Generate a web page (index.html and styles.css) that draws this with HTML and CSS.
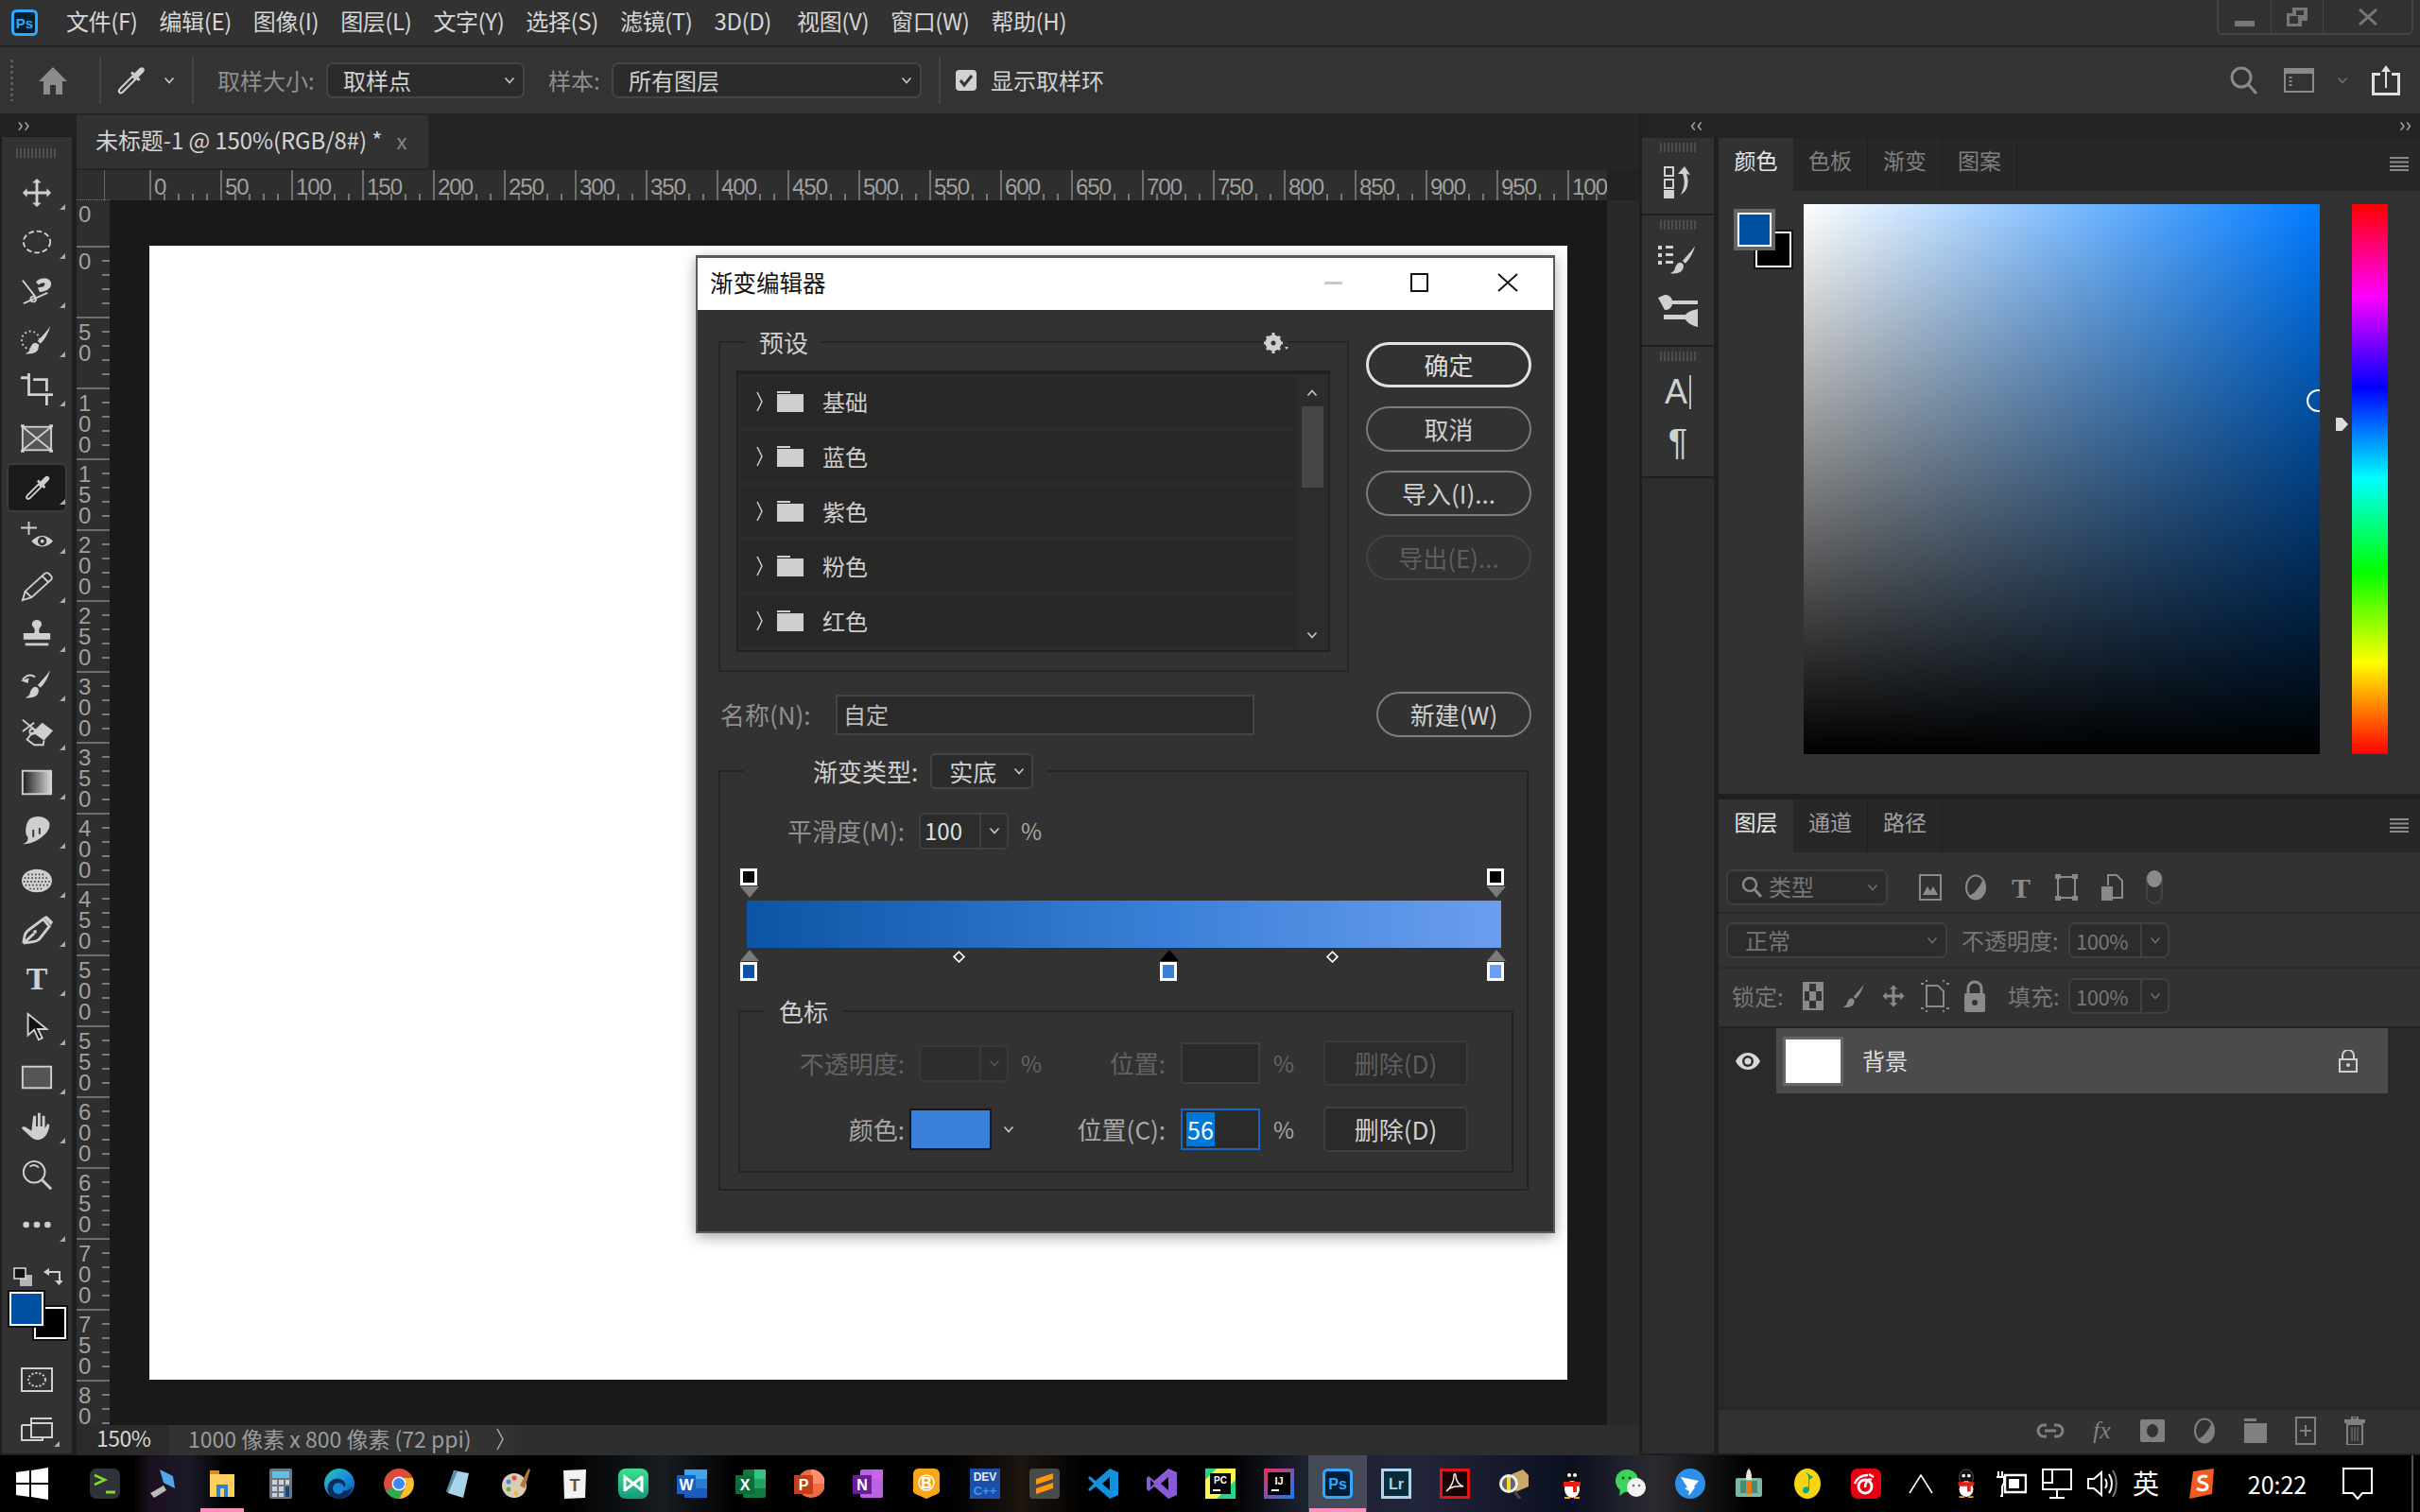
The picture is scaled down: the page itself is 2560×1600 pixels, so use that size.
FILE: index.html
```html
<!DOCTYPE html>
<html lang="zh-CN">
<head>
<meta charset="utf-8">
<title>Photoshop</title>
<link rel="stylesheet" href="styles.css">
</head>
<body>
<svg class="defs" width="0" height="0">
  <symbol id="chev" viewBox="0 0 12 8"><path d="M1.5 1.5L6 6.5l4.5-5" fill="none" stroke="currentColor" stroke-width="1.6"/></symbol>
  <symbol id="dropper" viewBox="0 0 36 36"><path class="t" d="M8 26L20 14l3 3L10 30c-3 2-5-1-2-4z"/><path class="f" d="M18 11l8 8 2-2-2-2 5-5c3-3-1-7-4-4l-5 5-2-2z"/></symbol>
  <symbol id="brush" viewBox="0 0 36 36"><path class="f" d="M33 2c-3 5-9 11-14 17l3 3c5-5 9-12 11-20zM17 21c-5 0-6 5-7 8-1 2-3 3-5 4 6 1 15 0 15-8 0-2-1-3-3-4z"/></symbol>
</svg>
<div class="app">
  <header class="menubar">
    <svg class="ps-logo" viewBox="0 0 28 28"><rect x="1.5" y="1.5" width="25" height="25" rx="4" fill="#061e2f" stroke="#31a8ff" stroke-width="3"/><text x="14" y="20" class="logo-text" fill="#31a8ff" font-size="15">Ps</text></svg>
    <nav class="menu">
      <span>文件(F)</span><span>编辑(E)</span><span>图像(I)</span><span>图层(L)</span><span>文字(Y)</span><span>选择(S)</span><span>滤镜(T)</span><span class="m3d">3D(D)</span><span>视图(V)</span><span>窗口(W)</span><span>帮助(H)</span>
    </nav>
    <div class="winctl">
      <div class="winbtn"><i class="w-min"></i></div>
      <div class="winbtn"><svg width="26" height="22" viewBox="0 0 26 22"><path d="M8 1h16v14h-6v6H2V7h6z" fill="#777"/><rect x="12" y="4" width="8" height="5" fill="#333"/><rect x="5" y="10" width="9" height="8" fill="#333"/></svg></div>
      <div class="winbtn"><svg width="22" height="18" viewBox="0 0 22 18"><path d="M2 1l18 16M20 1L2 17" stroke="#777" stroke-width="3"/></svg></div>
    </div>
  </header>

  <section class="options">
    <i class="opt-grip"></i>
    <div class="opt-cell opt-home"><svg width="32" height="30" viewBox="0 0 32 30"><path d="M16 1L1 16h5v14h7V20h6v10h7V16h5z" fill="#8c8c8c"/></svg></div>
    <div class="opt-cell opt-tool"><svg width="38" height="40" viewBox="0 0 36 36"><use href="#dropper"/></svg><svg class="chev-s"><use href="#chev"/></svg></div>
    <label class="opt-label">取样大小:</label>
    <div class="opt-select w210"><span>取样点</span><svg class="chev-s"><use href="#chev"/></svg></div>
    <label class="opt-label lb2">样本:</label>
    <div class="opt-select w328"><span>所有图层</span><svg class="chev-s"><use href="#chev"/></svg></div>
    <i class="opt-div"></i>
    <div class="opt-check"><svg width="22" height="22" viewBox="0 0 22 22"><rect x="0" y="0" width="22" height="22" rx="4" fill="#d2d2d2"/><path d="M5 11l4 5 8-10" fill="none" stroke="#333" stroke-width="3"/></svg><span>显示取样环</span></div>
    <div class="opt-right">
      <svg width="32" height="32" viewBox="0 0 32 32"><circle cx="13" cy="13" r="10" fill="none" stroke="#8a8a8a" stroke-width="3"/><path d="M20 20l9 10" stroke="#8a8a8a" stroke-width="3"/></svg>
      <svg width="32" height="26" viewBox="0 0 32 26"><rect x="1" y="1" width="30" height="24" fill="none" stroke="#8a8a8a" stroke-width="2"/><rect x="1" y="1" width="30" height="5" fill="#8a8a8a"/><path d="M7 9v12" stroke="#8a8a8a" stroke-width="3" stroke-dasharray="2 2"/></svg>
      <svg class="chev-s dim"><use href="#chev"/></svg>
      <svg width="32" height="32" viewBox="0 0 32 32"><path d="M16 0l-5 7h4v17h2V7h4z" fill="#e0e0e0"/><path d="M10 8H1v24h30V8h-9v3h6v18H4V11h6z" fill="#e0e0e0"/></svg>
    </div>
  </section>

  <div class="workspace">
    <aside class="leftcol">
      <div class="collapse"><span>››</span></div>
      <div class="toolbar">
        <i class="grip"></i>
        <div class="tool more"><svg class="tic" viewBox="0 0 36 36"><path class="f" d="M18 2l5 5h-3.5v9.5H29V13l5 5-5 5v-3.5h-9.500V29H23l-5 5-5-5h3.500v-9.500H7V23l-5-5 5-5v3.500h9.500V7H13z"/></svg></div>
        <div class="tool more"><svg class="tic" viewBox="0 0 36 36"><ellipse class="t" cx="18" cy="18" rx="15" ry="12" stroke-dasharray="6 3"/></svg></div>
        <div class="tool more"><svg class="tic" viewBox="0 0 36 36"><path class="t" d="M2 6l14 18M30 20L3 32"/><circle class="t" cx="14" cy="27" r="3"/><path class="f" d="M17 8c4-6 17-6 17 2 0 6-8 9-13 9l-2-5c4 0 8-1 8-4 0-2-4-2-7 1z"/></svg></div>
        <div class="tool more"><svg class="tic" viewBox="0 0 36 36"><circle class="t" cx="11" cy="18" r="10" stroke-dasharray="2 3"/></svg><svg class="tic over" viewBox="0 0 36 36"><use href="#brush"/></svg></div>
        <div class="tool more"><svg class="tic" viewBox="0 0 36 36"><path class="t wide" d="M0 5h8M9 0v24h20v12M14 7h15v13M30 24h6"/></svg></div>
        <div class="tool"><svg class="tic" viewBox="0 0 36 36"><rect x="2" y="5" width="32" height="26" fill="#555" stroke="#cfcfcf" stroke-width="2"/><path class="t" d="M2 5l32 26M34 5L2 31"/><path class="t wide" d="M0 4h4M32 4h4M0 32h4M32 32h4"/></svg></div>
        <div class="tool more active"><svg class="tic" viewBox="0 0 36 36"><use href="#dropper"/></svg></div>
        <div class="tool more"><svg class="tic" viewBox="0 0 36 36"><path class="t" d="M0 8h18M9 1v15"/><path class="f" d="M12 23c7-8 17-8 24 0-7 8-17 8-24 0z"/><circle cx="24" cy="23" r="5" fill="#323232"/><circle cx="24" cy="23" r="2" fill="#cfcfcf"/></svg></div>
        <div class="tool more"><svg class="tic" viewBox="0 0 36 36"><path class="t" d="M2 34l3-10L27 4c2-1 3-1 4 0l3 3c1 1 1 3 0 4L12 31zM5 24l7 7M24 7l7 7"/></svg></div>
        <div class="tool more"><svg class="tic" viewBox="0 0 36 36"><path class="f" d="M18 1c5 0 7 5 4 8-2 2-2 4-1 7h12v7H3v-7h12c1-3 1-5-1-7-3-3-1-8 4-8zM5 27h26v3H5z"/></svg></div>
        <div class="tool more"><svg class="tic" viewBox="0 0 36 36"><use href="#brush"/><path class="t" d="M2 13c5-6 10-6 14-3"/><path class="f" d="M0 14l9-3-1 6z"/></svg></div>
        <div class="tool more"><svg class="tic" viewBox="0 0 36 36"><path class="t" d="M2 3l15 12M2 16l13-10"/><circle class="t" cx="13" cy="16" r="3"/><path class="f" d="M24 6l12 9-10 11-13-9z"/><path class="t" d="M13 17l-6 8 8 6h10l1-5"/></svg></div>
        <div class="tool more"><svg class="tic" viewBox="0 0 36 36"><defs><linearGradient id="gt"><stop offset="0" stop-color="#1c1c1c"/><stop offset="1" stop-color="#d8d8d8"/></linearGradient></defs><rect x="2" y="5" width="32" height="26" fill="url(#gt)" stroke="#d0d0d0" stroke-width="2"/></svg></div>
        <div class="tool more"><svg class="tic" viewBox="0 0 36 36"><path class="f" d="M10 4c8-6 20-2 22 4 1 5-1 8-4 12-5 5-14 12-26 12 6-2 6-5 6-8-4-2-3-15 2-20z"/><path d="M14 16v8M21 14v7" stroke="#323232" stroke-width="2"/></svg></div>
        <div class="tool more"><svg class="tic" viewBox="0 0 36 36"><ellipse cx="18" cy="18" rx="17" ry="13" fill="#cfcfcf"/><path d="M8 11h20M4 15h28M3 19h30M5 23h26M10 27h16" stroke="#323232" stroke-width="1.800" stroke-dasharray="1.500 2.500"/></svg></div>
        <div class="tool more"><svg class="tic" viewBox="0 0 36 36"><path class="t wide" d="M3 33c1-7 1-12 6-15L25 6l7 8-11 14c-5 5-12 3-18 5l12-11"/><circle class="f" cx="16" cy="20" r="2"/><path class="f" d="M25 4l9 9 2-4-7-7z"/></svg></div>
        <div class="tool more"><svg class="tic vis" viewBox="0 0 36 36"><text x="18" y="30" class="t-glyph">T</text></svg></div>
        <div class="tool more"><svg class="tic" viewBox="0 0 36 36"><path d="M8 2v24l7-6 5 11 4-2-5-10h10z" fill="#111" stroke="#d0d0d0" stroke-width="2"/></svg></div>
        <div class="tool more"><svg class="tic" viewBox="0 0 36 36"><rect x="2" y="6" width="32" height="24" fill="#555" stroke="#d0d0d0" stroke-width="2"/></svg></div>
        <div class="tool more"><svg class="tic" viewBox="0 0 36 36"><path class="f" d="M14 6h3v12h2V3h3v15h2V6h3v14l3-5c2 0 2 1 2 2-1 8-5 16-13 16-6 0-10-6-18-13 1-2 3-2 5-1l6 4z"/></svg></div>
        <div class="tool"><svg class="tic" viewBox="0 0 36 36"><circle class="t" cx="15" cy="14" r="12"/><path class="t wide" d="M24 23l10 10"/><path class="t" d="M10 8c3-2 7-2 10 1"/></svg></div>
        <div class="tool more"><svg class="tic" viewBox="0 0 36 36"><circle class="f" cx="6" cy="18" r="3.500"/><circle class="f" cx="18" cy="18" r="3.500"/><circle class="f" cx="30" cy="18" r="3.500"/></svg></div>
        <div class="swap-row">
          <svg width="20" height="20" viewBox="0 0 20 20"><rect x="7" y="8" width="13" height="12" fill="#b5b5b5"/><rect x="1" y="1" width="12" height="11" fill="#111" stroke="#ddd" stroke-width="1.500"/></svg>
          <svg width="20" height="20" viewBox="0 0 20 20"><path class="t" d="M4 5h13v11"/><path class="f" d="M0 5l6-4v8zM12 14h9l-4.500 5z"/></svg>
        </div>
        <div class="fgbg"><i class="sw-bg"></i><i class="sw-fg"></i></div>
        <div class="tool-lower"><svg width="34" height="26" viewBox="0 0 34 26"><rect x="1" y="1" width="32" height="24" fill="none" stroke="#cfcfcf" stroke-width="2"/><ellipse cx="17" cy="13" rx="9" ry="7" fill="none" stroke="#cfcfcf" stroke-width="2" stroke-dasharray="2 2"/></svg></div>
        <div class="tool-lower more"><svg width="34" height="26" viewBox="0 0 34 26"><path class="t" d="M11 7h22v15H11zM11 7V2h22M1 9h10M1 9v16h22v-3"/></svg></div>
      </div>
    </aside>

    <main class="doc">
      <div class="tabrow">
        <div class="doctab"><span>未标题-1 @ 150%(RGB/8#) *</span><b>x</b></div>
      </div>
      <div class="rulerrow">
        <div class="corner"></div>
        <div class="ruler-top">
          <span>0</span><span>50</span><span>100</span><span>150</span><span>200</span><span>250</span><span>300</span><span>350</span><span>400</span><span>450</span><span>500</span><span>550</span><span>600</span><span>650</span><span>700</span><span>750</span><span>800</span><span>850</span><span>900</span><span>950</span><span>100</span>
        </div>
        <div class="ruler-end"></div>
      </div>
      <div class="canvasrow">
        <div class="ruler-left">
          <span class="first">0</span><span>0</span><span>50</span><span>100</span><span>150</span><span>200</span><span>250</span><span>300</span><span>350</span><span>400</span><span>450</span><span>500</span><span>550</span><span>600</span><span>650</span><span>700</span><span>750</span><span>80</span>
        </div>
        <div class="canvas"><div class="page"></div></div>
        <div class="vscroll"></div>
      </div>
      <div class="statusbar">
        <span class="zoomv">150%</span>
        <div class="info"><span>1000 像素 x 800 像素 (72 ppi)</span><svg width="10" height="26" viewBox="0 0 10 26"><path d="M2 2l6 11-6 11" fill="none" stroke="#aaa" stroke-width="1.500"/></svg></div>
      </div>
    </main>

    <div class="rightside">
      <div class="collapse-r"><span class="cl">‹‹</span><span class="cr">››</span></div>
      <div class="dockrow">
        <div class="dock1">
          <div class="dgroup g1"><i class="grip sm"></i>
            <svg width="30" height="34" viewBox="0 0 30 34"><path d="M1 1h9v9H1zM1 14h9v9H1z" fill="none" stroke="#d0d0d0" stroke-width="2"/><rect x="0" y="25" width="11" height="9" fill="#d0d0d0"/><path d="M15 8l7-8 6 9-4-1c3 8 2 17-6 22 4-8 5-14 2-22z" fill="#d0d0d0"/></svg>
          </div>
          <div class="dgroup g2"><i class="grip sm"></i>
            <svg width="42" height="34" viewBox="0 0 42 34"><path d="M0 2h4v4H0zM8 2h8v3H8zM0 10h4v4H0zM8 10h8v3H8zM0 18h4v4H0zM8 18h8v3H8z" fill="#d0d0d0"/><svg x="8" y="0" width="34" height="34"><use href="#brush"/></svg></svg>
            <svg width="42" height="34" viewBox="0 0 42 34"><path d="M0 3l7-3c3 0 7 1 8 6h27v4H15c-1 5-5 6-8 6zM42 15v19c-5-1-11-4-13-8H6v-5h23c2-3 8-5 13-6z" fill="#d0d0d0"/></svg>
          </div>
          <div class="dgroup g2"><i class="grip sm"></i>
            <span class="char-a">A<i></i></span>
            <span class="char-p">¶</span>
          </div>
          <div class="dfill"></div>
        </div>
        <div class="dock2">
          <section class="panel color-panel">
            <div class="ptabs"><span class="on">颜色</span><span>色板</span><span>渐变</span><span>图案</span><svg class="pmenu" viewBox="0 0 20 15"><path d="M0 1h20M0 5.500h20M0 10h20M0 14h20" stroke="#8a8a8a" stroke-width="2"/></svg></div>
            <div class="color-body">
              <div class="swatch-wrap"><i class="cs-bg"></i><i class="cs-fg"></i></div>
              <div class="field"><i class="ring"></i></div>
              <div class="hue"><i class="hue-arrow"></i></div>
            </div>
          </section>
          <section class="panel layers-panel">
            <div class="ptabs"><span class="on">图层</span><span>通道</span><span>路径</span><svg class="pmenu" viewBox="0 0 20 15"><path d="M0 1h20M0 5.500h20M0 10h20M0 14h20" stroke="#8a8a8a" stroke-width="2"/></svg></div>
            <div class="lrow filter">
              <div class="sel f-sel"><svg width="22" height="24" viewBox="0 0 22 24"><circle cx="9" cy="9" r="7" fill="none" stroke="#888" stroke-width="2.500"/><path d="M14 14l7 8" stroke="#888" stroke-width="3"/></svg><span>类型</span><svg class="chev-s dim"><use href="#chev"/></svg></div>
              <div class="ficons">
                <svg width="24" height="28" viewBox="0 0 24 28"><rect x="1" y="1" width="22" height="26" fill="none" stroke="#8a8a8a" stroke-width="2"/><path d="M4 22l5-9 3 5 3-5 5 9z" fill="#8a8a8a"/></svg>
                <svg width="24" height="28" viewBox="0 0 24 28"><ellipse cx="12" cy="14" rx="10" ry="12.500" fill="none" stroke="#8a8a8a" stroke-width="2"/><path d="M19.500 6C16 14 10 22 4.500 22.500A10 12.500 0 0019.500 6z" fill="#8a8a8a"/></svg>
                <svg class="vis" width="24" height="28" viewBox="0 0 24 28"><text x="12" y="25" class="t-glyph small">T</text></svg>
                <svg width="24" height="28" viewBox="0 0 24 28"><rect x="3" y="3" width="18" height="22" fill="none" stroke="#8a8a8a" stroke-width="2"/><path d="M0 0h6v5H0zM18 0h6v5h-6zM0 23h6v5H0zM18 23h6v5h-6z" fill="#8a8a8a"/></svg>
                <svg width="24" height="28" viewBox="0 0 24 28"><path d="M8 12V1h9l6 6v18H13" fill="none" stroke="#8a8a8a" stroke-width="2"/><rect x="1" y="13" width="12" height="15" fill="#8a8a8a"/></svg>
                <i class="ftoggle"></i>
              </div>
            </div>
            <div class="lrow blend">
              <div class="sel b-sel"><span>正常</span><svg class="chev-s dim"><use href="#chev"/></svg></div>
              <label class="lab-op">不透明度:</label>
              <div class="mini-spin"><span>100%</span><em><svg class="chev-s dim"><use href="#chev"/></svg></em></div>
            </div>
            <div class="lrow lock">
              <label class="lab-lock">锁定:</label>
              <div class="lockicons">
                <svg width="24" height="32" viewBox="0 0 24 32"><rect x="1" y="1" width="22" height="30" fill="#8a8a8a"/><path d="M8 3h7v8H8zM3 11h5v10H3zM15 11h6v10h-6zM8 21h7v8H8z" fill="#323232"/></svg>
                <svg width="28" height="34" viewBox="0 0 36 36"><path d="M33 2c-3 5-9 11-14 17l3 3c5-5 9-12 11-20zM17 21c-5 0-6 5-7 8-1 2-3 3-5 4 6 1 15 0 15-8 0-2-1-3-3-4z" fill="#8a8a8a"/></svg>
                <svg width="26" height="34" viewBox="0 0 36 36"><path d="M18 2l6 6h-4v8h8v-4l6 6-6 6v-4h-8v8h4l-6 6-6-6h4v-8H8v4l-6-6 6-6v4h8V8h-4z" fill="#8a8a8a"/></svg>
                <svg width="30" height="34" viewBox="0 0 30 34"><path d="M6 6h12l6 6v16H6z" fill="none" stroke="#8a8a8a" stroke-width="2"/><path d="M0 4h3M27 4h3M0 30h3M27 30h3M6 0v2M24 0v2M6 32v2M24 32v2" stroke="#8a8a8a" stroke-width="2"/></svg>
                <svg width="22" height="34" viewBox="0 0 22 34"><path d="M4 14V9a7 7 0 0114 0v5" fill="none" stroke="#8a8a8a" stroke-width="3"/><rect y="14" width="22" height="20" rx="2" fill="#8a8a8a"/><circle cx="11" cy="24" r="3" fill="#323232"/></svg>
              </div>
              <label class="lab-fill">填充:</label>
              <div class="mini-spin"><span>100%</span><em><svg class="chev-s dim"><use href="#chev"/></svg></em></div>
            </div>
            <div class="layerlist">
              <div class="layer">
                <div class="eyecell"><svg width="26" height="18" viewBox="0 0 26 18"><path d="M0 9c6-12 20-12 26 0-6 12-20 12-26 0z" fill="#d8d8d8"/><circle cx="13" cy="9" r="6" fill="#2b2b2b"/><circle cx="13" cy="9" r="3.500" fill="#d8d8d8"/></svg></div>
                <div class="layer-sel">
                  <i class="thumb"></i><span>背景</span>
                  <svg class="l-lock" width="20" height="24" viewBox="0 0 20 24"><path d="M4 10V6a6 6 0 0112 0v4" fill="none" stroke="#d0d0d0" stroke-width="2"/><rect x="1" y="10" width="18" height="13" fill="none" stroke="#d0d0d0" stroke-width="2"/><circle cx="10" cy="16" r="2" fill="#d0d0d0"/></svg>
                </div>
              </div>
            </div>
            <div class="lfooter">
              <svg width="30" height="22" viewBox="0 0 30 22"><path d="M11 5H8a6 6 0 000 12h3M19 5h3a6 6 0 010 12h-3M9 11h12" fill="none" stroke="#808080" stroke-width="3"/></svg>
              <span class="fx">fx</span>
              <svg width="26" height="24" viewBox="0 0 26 24"><rect width="26" height="24" rx="2" fill="#808080"/><ellipse cx="13" cy="12" rx="6" ry="7" fill="#323232"/></svg>
              <svg width="24" height="28" viewBox="0 0 24 28"><ellipse cx="12" cy="14" rx="10" ry="12.500" fill="none" stroke="#808080" stroke-width="2"/><path d="M19.500 6C16 14 10 22 4.500 22.500A10 12.500 0 0019.500 6z" fill="#808080"/></svg>
              <svg width="24" height="26" viewBox="0 0 24 26"><path d="M0 0h13v3H0zM0 5h24v21H0z" fill="#808080"/></svg>
              <svg width="22" height="30" viewBox="0 0 22 30"><rect x="1" y="1" width="20" height="28" fill="none" stroke="#808080" stroke-width="2"/><path d="M11 9v12M5 15h12" stroke="#808080" stroke-width="2"/></svg>
              <svg width="22" height="30" viewBox="0 0 22 30"><path d="M0 4h22v2H0zM8 0h6v3H8zM3 8h16v22H3z" fill="none" stroke="#808080" stroke-width="2"/><path d="M8 11v15M11 11v15M14 11v15" stroke="#808080"/></svg>
            </div>
          </section>
        </div>
      </div>
    </div>
  </div>

  <footer class="taskbar">
    <div class="tb-win"><svg width="34" height="34" viewBox="0 0 34 34"><path d="M0 5l14-2v13H0zM16 3l18-3v16H16zM0 18h14v13L0 29zM16 18h18v16l-18-3z" fill="#fff"/></svg></div>
    <div class="tb-apps">
      <i class="tb"><svg viewBox="0 0 32 32"><rect width="32" height="32" rx="7" fill="#2d3338"/><path d="M5 7l11 5-11 5" fill="none" stroke="#84d92a" stroke-width="2.500"/><path d="M17 25h10" stroke="#84d92a" stroke-width="3"/></svg></i>
      <i class="tb"><svg viewBox="0 0 32 32"><path d="M12 1l14 7 2 13-12-6z" fill="#4fa8e8"/><path d="M2 26l14-8 3 5-13 8z" fill="#bbb"/></svg></i>
      <i class="tb ul"><svg viewBox="0 0 32 32"><path d="M3 2h10v6H3z" fill="#d98e1c"/><path d="M3 6h26v24H3z" fill="#ffcf5e"/><path d="M10 30V17h12v13h-4V21h-4v9z" fill="#2b7fd4"/></svg></i>
      <i class="tb"><svg viewBox="0 0 32 32"><rect x="4" width="24" height="32" rx="2" fill="#6b7785"/><rect x="7" y="3" width="18" height="7" fill="#57c5e8"/><path d="M7 12h5v5H7zM14 12h5v5h-5zM21 12h4v5h-4zM7 19h5v5H7zM14 19h5v5h-5zM7 26h5v4H7zM14 26h5v4h-5z" fill="#cdd3d9"/><rect x="21" y="19" width="4" height="11" fill="#17467c"/></svg></i>
      <i class="tb"><svg viewBox="0 0 32 32"><defs><linearGradient id="edge" x1="0" y1="0" x2="1" y2="1"><stop offset="0" stop-color="#33c6a8"/><stop offset=".5" stop-color="#1a8fdc"/><stop offset="1" stop-color="#0b4fa8"/></linearGradient></defs><circle cx="16" cy="16" r="16" fill="url(#edge)"/><path d="M4 18c2-8 14-10 18-3 2 4-2 6-6 6 4 4 10 3 14-2-1 8-8 13-14 13-9 0-14-7-12-14z" fill="#0a2d5e"/><circle cx="15" cy="21" r="6" fill="#1583d6"/></svg></i>
      <i class="tb"><svg viewBox="0 0 32 32"><circle cx="16" cy="16" r="16" fill="#dd4b3e"/><path d="M16 16L2 24a16 16 0 0014 8l8-16z" fill="#2fa84f"/><path d="M16 10h14.500a16 16 0 01-14 22l8-16z" fill="#fbc02d"/><circle cx="16" cy="16" r="7.500" fill="#fff"/><circle cx="16" cy="16" r="6" fill="#4286f4"/></svg></i>
      <i class="tb"><svg viewBox="0 0 32 32"><path d="M12 2l16 3-6 26-16-5z" fill="#a9d4e8"/><path d="M12 2l4 1-10 23-2-2z" fill="#5e8ba0"/></svg></i>
      <i class="tb"><svg viewBox="0 0 32 32"><ellipse cx="14" cy="18" rx="13" ry="13" fill="#d9cdb8"/><circle cx="8" cy="14" r="2.500" fill="#3a8ee6"/><circle cx="14" cy="10" r="2.500" fill="#e64a3a"/><circle cx="8" cy="22" r="2.500" fill="#56b84a"/><circle cx="16" cy="26" r="2.500" fill="#e6b83a"/><path d="M20 18L29 0l2 1-6 20z" fill="#b3763a"/></svg></i>
      <i class="tb"><svg viewBox="0 0 32 32"><path d="M4 2l24-1-1 30-22 1z" fill="#f2f2f2"/><text x="16" y="24" class="logo-text" fill="#555" font-size="18">T</text></svg></i>
      <i class="tb"><svg viewBox="0 0 32 32"><defs><linearGradient id="mint" x1="0" y1="0" x2="0" y2="1"><stop offset="0" stop-color="#3ee08e"/><stop offset="1" stop-color="#129a7f"/></linearGradient></defs><rect width="32" height="32" rx="8" fill="url(#mint)"/><path d="M7 24V9l18 14V8" fill="none" stroke="#fff" stroke-width="3"/><path d="M7 23L25 9" stroke="#fff" stroke-width="3"/></svg></i>
      <i class="tb"><svg viewBox="0 0 32 32"><rect x="8" y="1" width="24" height="30" rx="2" fill="#2b7cd3"/><rect x="8" y="1" width="24" height="10" fill="#41a5ee" /><rect x="8" y="21" width="24" height="10" fill="#185abd"/><rect y="7" width="20" height="20" fill="#1b5ebe"/><text x="10" y="23" class="logo-text" fill="#fff" font-size="16">W</text></svg></i>
      <i class="tb"><svg viewBox="0 0 32 32"><rect x="8" y="1" width="24" height="30" rx="2" fill="#107c41"/><rect x="20" y="1" width="12" height="10" fill="#33c481"/><rect x="20" y="11" width="12" height="10" fill="#21a366"/><rect y="7" width="20" height="20" fill="#0e6b3a"/><text x="10" y="23" class="logo-text" fill="#fff" font-size="16">X</text></svg></i>
      <i class="tb"><svg viewBox="0 0 32 32"><circle cx="18" cy="16" r="15" fill="#ed6c47"/><path d="M18 1a15 15 0 0115 15H18z" fill="#ff8f6b"/><rect y="7" width="20" height="20" fill="#c43e1c"/><text x="10" y="23" class="logo-text" fill="#fff" font-size="16">P</text></svg></i>
      <i class="tb"><svg viewBox="0 0 32 32"><rect x="8" y="1" width="24" height="30" rx="2" fill="#ba63e0"/><rect x="22" y="1" width="10" height="10" fill="#ca64ea"/><rect y="7" width="20" height="20" fill="#6a1b9a"/><text x="10" y="23" class="logo-text" fill="#fff" font-size="16">N</text></svg></i>
      <i class="tb"><svg viewBox="0 0 32 32"><path d="M8 0h16c4 0 6 3 6 6v18c0 3-6 4-14 8C8 28 2 27 2 24V6c0-3 2-6 6-6z" fill="#f9a61a"/><circle cx="16" cy="15" r="8" fill="none" stroke="#fff" stroke-width="1.500"/><text x="16" y="21" class="logo-text" fill="#fff" font-size="16">B</text></svg></i>
      <i class="tb"><svg viewBox="0 0 32 32"><rect width="32" height="32" fill="#1d4fa8"/><text x="16" y="13" class="logo-text" fill="#e8eef8" font-size="12">DEV</text><text x="16" y="28" class="logo-text" fill="#2d9cff" font-size="13">C++</text></svg></i>
      <i class="tb"><svg viewBox="0 0 32 32"><rect width="32" height="32" rx="4" fill="#4a4a4a"/><path d="M7 11l18-6v6L7 17zM25 21L7 27v-6l18-6z" fill="#ff9800"/></svg></i>
      <i class="tb"><svg viewBox="0 0 32 32"><path d="M23 0l9 4v24l-9 4L8 19l-6 5-2-2 6-6-6-6 2-2 6 5zm0 9l-8 7 8 7z" fill="#1590dd"/></svg></i>
      <i class="tb"><svg viewBox="0 0 32 32"><path d="M23 0l9 4v24l-9 4L8 19l-6 5-2-2v-12l2-2 6 5zm0 9l-8 7 8 7zM4 12v8l4-4z" fill="#8a5bd6"/></svg></i>
      <i class="tb"><svg viewBox="0 0 32 32"><rect width="32" height="32" fill="#21d789"/><path d="M0 32V12L12 0h20v12L12 32z" fill="#fcf84a"/><rect x="5" y="5" width="22" height="22" fill="#000"/><text x="16" y="16" class="logo-text" fill="#fff" font-size="10">PC</text><rect x="8" y="22" width="8" height="2" fill="#fff"/></svg></i>
      <i class="tb"><svg viewBox="0 0 32 32"><defs><linearGradient id="ij" x1="0" y1="0" x2="1" y2="1"><stop offset="0" stop-color="#fe2857"/><stop offset="1" stop-color="#087cfa"/></linearGradient></defs><rect width="32" height="32" fill="url(#ij)"/><rect x="4" y="4" width="24" height="24" fill="#000"/><text x="16" y="17" class="logo-text" fill="#fff" font-size="11">IJ</text><rect x="8" y="22" width="8" height="2" fill="#fff"/></svg></i>
      <i class="tb active"><svg viewBox="0 0 32 32"><rect x="1.500" y="1.500" width="29" height="29" rx="4" fill="#001e36" stroke="#31a8ff" stroke-width="3"/><text x="16" y="22" class="logo-text" fill="#31a8ff" font-size="16">Ps</text></svg></i>
      <i class="tb"><svg viewBox="0 0 32 32"><rect x="1.500" y="1.500" width="29" height="29" fill="#0b2a3a" stroke="#add5ec" stroke-width="3"/><text x="16" y="22" class="logo-text" fill="#add5ec" font-size="16">Lr</text></svg></i>
      <i class="tb"><svg viewBox="0 0 32 32"><rect x="1.500" y="1.500" width="29" height="29" fill="#1b0203" stroke="#e01616" stroke-width="3"/><path d="M7 24c5-4 8-11 8-16 0-3 2-3 2 0 0 5 4 10 8 11-6-1-14 0-18 5z" fill="none" stroke="#f0f0f0" stroke-width="1.500"/></svg></i>
      <i class="tb"><svg viewBox="0 0 32 32"><path d="M14 6l12-5 6 6v12l-14 6z" fill="#c9a764"/><circle cx="11" cy="16" r="10" fill="#eee"/><circle cx="11" cy="16" r="7" fill="#666"/><rect x="9" y="9" width="4" height="14" fill="#f2d63a"/><path d="M17 24l6 8" stroke="#444" stroke-width="3"/></svg></i>
      <i class="tb"><svg viewBox="0 0 32 32"><ellipse cx="16" cy="9" rx="8" ry="9" fill="#111"/><circle cx="13" cy="7" r="2" fill="#fff"/><circle cx="19" cy="7" r="2" fill="#fff"/><ellipse cx="16" cy="22" rx="8" ry="9" fill="#fff"/><path d="M7 14h18v4l-4 1v6h-4v-6H7z" fill="#e61e14"/><path d="M8 30h6v2H8zM18 30h6v2h-6z" fill="#f9a61a"/></svg></i>
      <i class="tb"><svg viewBox="0 0 32 32"><ellipse cx="12" cy="13" rx="12" ry="12" fill="#3dd35f"/><path d="M5 22l-1 7 7-5z" fill="#3dd35f"/><ellipse cx="22" cy="20" rx="10" ry="10" fill="#f2f2f2"/><circle cx="8" cy="10" r="1.500" fill="#0d4f1b"/><circle cx="15" cy="10" r="1.500" fill="#0d4f1b"/><circle cx="19" cy="18" r="1.200" fill="#666"/><circle cx="25" cy="18" r="1.200" fill="#666"/></svg></i>
      <i class="tb"><svg viewBox="0 0 32 32"><circle cx="16" cy="16" r="16" fill="#2d8fe8"/><path d="M6 9l19 4-5 6 1 1-5 7-2 1 1-4-5-3 3-1z" fill="#fff"/></svg></i>
      <i class="tb"><svg viewBox="0 0 32 32"><rect x="2" y="10" width="28" height="20" rx="2" fill="#7fb8a0"/><rect x="7" y="13" width="18" height="13" fill="#47897a"/><rect x="13" y="13" width="6" height="14" fill="#e87a1e"/><path d="M16 0c3 3 3 8 3 12h-6c0-4 0-9 3-12z" fill="#f0e6d0"/></svg></i>
      <i class="tb"><svg viewBox="0 0 32 32"><ellipse cx="16" cy="16" rx="14" ry="16" fill="#f7d414"/><path d="M14 4l8 5-4 3v10c0 5-7 6-7 1 0-3 4-5 6-3V8z" fill="#07a884"/></svg></i>
      <i class="tb"><svg viewBox="0 0 32 32"><rect width="32" height="32" rx="7" fill="#e60012"/><circle cx="15" cy="19" r="7" fill="none" stroke="#fff" stroke-width="3"/><path d="M18 7c-7 0-12 4-14 9M19 6l5 3M15 20c0-5 3-10 7-8" fill="none" stroke="#fff" stroke-width="2.500"/></svg></i>
    </div>
    <div class="tb-tray">
      <i class="tr w48"><svg width="26" height="22" viewBox="0 0 26 22"><path d="M1 21L13 2l12 19" fill="none" stroke="#fff" stroke-width="1.500"/></svg></i>
      <i class="tr w48"><svg width="30" height="32" viewBox="0 0 32 32"><ellipse cx="16" cy="9" rx="8" ry="9" fill="#111" stroke="#555"/><circle cx="13" cy="7" r="2" fill="#fff"/><circle cx="19" cy="7" r="2" fill="#fff"/><ellipse cx="16" cy="22" rx="8" ry="9" fill="#fff"/><path d="M7 14h18v4l-4 1v6h-4v-6H7z" fill="#e61e14"/><path d="M8 30h6v2H8zM18 30h6v2h-6z" fill="#f9a61a"/></svg></i>
      <i class="tr w48"><svg width="32" height="30" viewBox="0 0 32 30"><rect x="9" y="6" width="22" height="18" fill="none" stroke="#fff" stroke-width="2.500"/><rect x="13" y="10" width="11" height="10" fill="#fff"/><path d="M2 8V2M6 8V2M0 8h8v6l-2 4v10H4" fill="none" stroke="#fff" stroke-width="2"/></svg></i>
      <i class="tr w48"><svg width="32" height="32" viewBox="0 0 32 32"><rect x="1" y="1" width="30" height="21" fill="none" stroke="#fff" stroke-width="2"/><rect x="1" y="1" width="10" height="14" fill="#000" stroke="#fff" stroke-width="2"/><path d="M16 22v8M8 31h16" stroke="#fff" stroke-width="2"/></svg></i>
      <i class="tr w48"><svg width="32" height="32" viewBox="0 0 32 32"><path d="M1 11h6l8-7v24l-8-7H1z" fill="none" stroke="#fff" stroke-width="2"/><path d="M19 11c2 3 2 7 0 10M23 6c4 6 4 14 0 20" fill="none" stroke="#fff" stroke-width="2"/><path d="M27 2c5 8 5 20 0 28" fill="none" stroke="#777" stroke-width="2"/></svg></i>
      <span class="tr w44 ime">英</span>
      <i class="tr w74"><svg width="30" height="32" viewBox="0 0 30 32"><path d="M6 3l22-3-2 27L2 32z" fill="#f15a22"/><path d="M21 9c-3-2-9-1-9 3s9 2 9 7c0 4-7 5-11 2" fill="none" stroke="#fff" stroke-width="3"/></svg></i>
      <span class="tr w86 clock">20:22</span>
      <i class="tr w84"><svg width="32" height="34" viewBox="0 0 32 34"><path d="M1 1h30v26H21l-5 6-5-6H1z" fill="none" stroke="#fff" stroke-width="2"/></svg></i>
      <i class="showdesk"></i>
    </div>
  </footer>

  <div class="dialog">
    <div class="dlg-title">
      <span>渐变编辑器</span>
      <div class="dlg-ctl"><i class="d-min"></i><i class="d-max"></i><svg width="22" height="20" viewBox="0 0 22 20"><path d="M1 1l20 18M21 1L1 19" stroke="#111" stroke-width="1.800"/></svg></div>
    </div>
    <div class="dlg-body">
      <div class="dlg-top">
        <fieldset class="grp grp-preset">
          <legend>预设</legend>
          <svg class="gear" width="26" height="24" viewBox="0 0 26 24"><circle cx="10" cy="12" r="6" fill="none" stroke="#d0d0d0" stroke-width="5"/><path d="M10 1v22M0 12h20M3 5l14 14M17 5L3 19" stroke="#d0d0d0" stroke-width="3"/><circle cx="10" cy="12" r="2.500" fill="#323232"/><path d="M22 16h4l-2 3z" fill="#d0d0d0"/></svg>
          <div class="plist">
            <div class="prows">
              <div class="prow"><svg class="pchev" viewBox="0 0 8 22"><path d="M1 1l5 10-5 10" fill="none" stroke="#ccc" stroke-width="1.500"/></svg><svg class="pfold" viewBox="0 0 28 22"><path d="M0 0h14v2H0zM0 3h28v19H0z" fill="#cfcfcf"/></svg><span>基础</span></div>
              <div class="prow"><svg class="pchev" viewBox="0 0 8 22"><path d="M1 1l5 10-5 10" fill="none" stroke="#ccc" stroke-width="1.500"/></svg><svg class="pfold" viewBox="0 0 28 22"><path d="M0 0h14v2H0zM0 3h28v19H0z" fill="#cfcfcf"/></svg><span>蓝色</span></div>
              <div class="prow"><svg class="pchev" viewBox="0 0 8 22"><path d="M1 1l5 10-5 10" fill="none" stroke="#ccc" stroke-width="1.500"/></svg><svg class="pfold" viewBox="0 0 28 22"><path d="M0 0h14v2H0zM0 3h28v19H0z" fill="#cfcfcf"/></svg><span>紫色</span></div>
              <div class="prow"><svg class="pchev" viewBox="0 0 8 22"><path d="M1 1l5 10-5 10" fill="none" stroke="#ccc" stroke-width="1.500"/></svg><svg class="pfold" viewBox="0 0 28 22"><path d="M0 0h14v2H0zM0 3h28v19H0z" fill="#cfcfcf"/></svg><span>粉色</span></div>
              <div class="prow"><svg class="pchev" viewBox="0 0 8 22"><path d="M1 1l5 10-5 10" fill="none" stroke="#ccc" stroke-width="1.500"/></svg><svg class="pfold" viewBox="0 0 28 22"><path d="M0 0h14v2H0zM0 3h28v19H0z" fill="#cfcfcf"/></svg><span>红色</span></div>
            </div>
            <div class="pscroll">
              <svg class="chev-s up"><use href="#chev"/></svg>
              <i class="pthumb"></i>
              <svg class="chev-s down"><use href="#chev"/></svg>
            </div>
          </div>
        </fieldset>
        <div class="dlg-btns">
          <button class="pill primary">确定</button>
          <button class="pill">取消</button>
          <button class="pill">导入(I)...</button>
          <button class="pill off">导出(E)...</button>
        </div>
      </div>
      <div class="name-row">
        <label>名称(N):</label>
        <div class="name-input">自定</div>
        <button class="pill new">新建(W)</button>
      </div>
      <fieldset class="grp grp-grad">
        <legend><span>渐变类型:</span><div class="gtype"><span>实底</span><svg class="chev-s"><use href="#chev"/></svg></div></legend>
        <div class="smooth">
          <label class="l174 lw">平滑度(M):</label>
          <div class="ctl110"><div class="spin"><span>100</span><em><svg class="chev-s"><use href="#chev"/></svg></em></div></div>
          <span class="pct">%</span>
        </div>
        <div class="gradbox">
          <div class="gbar"></div>
          <i class="stop top s-l"></i><i class="stop top s-r"></i>
          <i class="stop bot s-l b1"></i><i class="stop bot s-m b2 cur"></i><i class="stop bot s-r b3"></i>
          <i class="dia d1"></i><i class="dia d2"></i>
        </div>
        <fieldset class="grp grp-stops">
          <legend>色标</legend>
          <div class="srow off-row">
            <label class="l174">不透明度:</label>
            <div class="ctl110"><div class="spin dim"><span></span><em><svg class="chev-s"><use href="#chev"/></svg></em></div></div>
            <span class="pct">%</span>
            <label class="l129">位置:</label>
            <div class="posbox"></div>
            <span class="pct p2">%</span>
            <button class="rect off">删除(D)</button>
          </div>
          <div class="srow">
            <label class="l174">颜色:</label>
            <div class="ctl110"><i class="cswatch"></i><svg class="chev-s"><use href="#chev"/></svg></div>
            <span class="pct hidden">%</span>
            <label class="l129">位置(C):</label>
            <div class="posbox focus"><span>56</span></div>
            <span class="pct p2">%</span>
            <button class="rect">删除(D)</button>
          </div>
        </fieldset>
      </fieldset>
    </div>
  </div>
</div>
</body>
</html>
```
FILE: styles.css
```css
*{box-sizing:border-box}
html,body{margin:0;padding:0;background:#000}
.defs{position:absolute}
.app{position:relative;width:2560px;height:1600px;overflow:hidden;display:flex;flex-direction:column;background:#222;color:#d0d0d0;font:24px/1.2 "Noto Sans CJK SC","Liberation Sans",sans-serif}
i,em{font-style:normal;display:block}
.t{fill:none;stroke:#cfcfcf;stroke-width:2}
.t.wide{stroke-width:3}
.f{fill:#cfcfcf}
.vis{overflow:visible}
.logo-text{font-family:"Liberation Sans",sans-serif;font-weight:700;text-anchor:middle;letter-spacing:0}
.t-glyph{font:700 36px "Liberation Serif",serif;fill:#cfcfcf;text-anchor:middle}
.t-glyph.small{font-size:30px;fill:#8a8a8a}
.chev-s{width:12px;height:8px;color:#c8c8c8;flex:none}
.chev-s.dim{color:#6e6e6e}

.menubar{height:48px;flex:none;background:#323232;display:flex;align-items:center;margin-bottom:2px;position:relative}
.ps-logo{width:28px;height:28px;margin-left:12px;flex:none}
.menu{display:flex;gap:23px;margin-left:30px;font-size:24px;letter-spacing:-.4px;color:#d6d6d6;padding-bottom:3px}
.m3d{margin-right:4px}
.winctl{display:flex;margin-left:auto;margin-right:7px;align-self:flex-start;height:37px;border:2px solid #444;border-top:0;border-radius:0 0 6px 6px}
.winbtn{width:55px;display:flex;align-items:center;justify-content:center;border-left:1px solid #444;padding-top:1px}
.winbtn:first-child{border-left:0}
.winbtn:last-child{width:94px}
.w-min{width:21px;height:6px;background:#777;margin-top:14px}

.options{height:70px;flex:none;background:#333;display:flex;align-items:center;color:#d0d0d0}
.opt-grip{width:3px;height:44px;margin-left:11px;background:repeating-linear-gradient(180deg,#5a5a5a 0 3px,transparent 3px 6px)}
.opt-cell{display:flex;align-items:center;border-right:2px solid #454545;height:50px}
.opt-home{width:93px;justify-content:center}
.opt-home svg{margin-right:8px}
.opt-tool{width:98px;padding-left:12px;gap:16px}
.opt-label{color:#8e8e8e;margin-left:25px;width:102px;white-space:nowrap}
.opt-label.lb2{margin-left:25px;width:60px}
.opt-select{height:38px;background:#2b2b2b;border:2px solid #444;border-radius:7px;display:flex;align-items:center;justify-content:space-between;padding:0 8px 0 16px;margin-left:15px}
.opt-label + .opt-select{margin-left:13px}
.lb2 + .opt-select{margin-left:7px}
.w210{width:210px}
.w328{width:328px}
.opt-div{width:2px;height:50px;background:#454545;margin-left:18px}
.opt-check{display:flex;align-items:center;gap:15px;margin-left:16px}
.opt-right{margin-left:auto;margin-right:20px;display:flex;align-items:center;gap:26px}
.opt-right .chev-s{margin:0 -2px}

.workspace{height:1420px;flex:none;display:flex;background:#1f1f1f}
.leftcol{width:81px;flex:none;display:flex;flex-direction:column;padding-bottom:2px}
.collapse{height:24px;padding-left:18px;font-size:22px;line-height:20px;color:#aaa;background:#222}
.toolbar{margin-top:1px;width:74px;margin-left:2px;flex:1;background:#323232;display:flex;flex-direction:column;align-items:center}
.grip{display:block;flex:none;width:44px;height:10px;margin:12px 0 11px;background:repeating-linear-gradient(90deg,#4d4d4d 0 2px,transparent 2px 4px)}
.tool{width:64px;height:52px;flex:none;display:flex;align-items:center;justify-content:center;position:relative;border:2px solid transparent}
.tool.active{background:#1b1b1b;border-color:#3c3c3c;border-radius:6px}
.tic{width:34px;height:34px;flex:none}
.tic.over{margin-left:-34px}
.more::after{content:"";position:absolute;right:0;bottom:6px;width:0;height:0;border-left:6px solid transparent;border-bottom:6px solid #aaa}
.swap-row{height:43px;width:100%;display:flex;justify-content:space-between;align-items:flex-end;padding:0 10px 4px 12px;flex:none}
.fgbg{width:66px;height:52px;position:relative;flex:none;margin-top:2px;left:2px}
.sw-bg,.sw-fg{position:absolute;outline:2px solid #111;border:2px solid #fff}
.sw-bg{left:28px;top:16px;width:34px;height:34px;background:#000}
.sw-fg{left:2px;top:0;width:36px;height:36px;background:#0050a4}
.tool-lower{height:50px;width:100%;display:flex;align-items:center;justify-content:center;flex:none;position:relative;margin-top:16px}
.tool-lower.more{margin-top:2px}
.tool-lower.more::after{right:13px}

.doc{width:1653px;flex:none;display:flex;flex-direction:column;background:#262626}
.tabrow{height:60px;flex:none;padding-top:2px;background:#252525}
.doctab{width:372px;height:56px;background:#323232;display:flex;align-items:center;padding-left:20px;white-space:nowrap;color:#d4d4d4;padding-bottom:3px;letter-spacing:-.1px}
.doctab b{font-weight:400;color:#888;margin-left:15px;font-size:22px}
.rulerrow{height:32px;flex:none;display:flex;background:#2e2e2e}
.corner{width:35px;flex:none;border-bottom:1px dotted #777;background:linear-gradient(90deg,transparent 29px,#666 29px,#666 30px,transparent 30px)}
.ruler-top{width:1584px;flex:none;display:flex;overflow:hidden;padding-left:42px;background:repeating-linear-gradient(90deg,#777 0 2px,transparent 2px 15px) 42px 100%/100% 7px no-repeat;color:#a0a0a0;font:24px/30px "Liberation Sans",sans-serif;letter-spacing:-1px}
.ruler-top span{width:75px;flex:none;border-left:2px solid #6e6e6e;padding:3px 0 0 3px}
.ruler-end{flex:1;background:#222}
.canvasrow{flex:1;min-height:0;display:flex}
.ruler-left{width:35px;flex:none;display:flex;flex-direction:column;overflow:hidden;background:#2e2e2e repeating-linear-gradient(180deg,#777 0 2px,transparent 2px 15px) 100% 48px/8px 100% no-repeat;color:#a0a0a0;font:24px/22px "Liberation Sans",sans-serif}
.ruler-left span{height:75px;flex:none;border-top:2px solid #6e6e6e;padding:4px 19px 0 2px;width:100%;word-break:break-all}
.ruler-left .first{height:48px;border-top:0}
.canvas{flex:1;background:#191919;padding:48px 0 0 42px;overflow:hidden}
.page{width:1500px;height:1200px;background:#fff}
.vscroll{width:34px;flex:none;background:#292929}
.statusbar{height:32px;flex:none;display:flex;background:#2e2e2e;font-size:23px}
.zoomv{width:97px;padding:0 0 0 21px;background:#2a2a2a;color:#d6d6d6;letter-spacing:-.5px;white-space:nowrap}
.info{width:367px;display:flex;align-items:center;justify-content:space-between;padding:0 11px 3px 21px;background:#323232;color:#9c9c9c;white-space:nowrap}

.rightside{flex:1;display:flex;flex-direction:column;padding-left:3px;background:#1f1f1f}
.collapse-r{height:26px;flex:none;display:flex;justify-content:space-between;padding:0 9px 0 51px;font-size:22px;line-height:20px;color:#aaa;background:#232323}
.dockrow{flex:1;display:flex;gap:5px;min-height:0;padding-bottom:2px}
.dock1{width:76px;flex:none;display:flex;flex-direction:column;gap:2px;align-items:stretch}
.dgroup{background:#323232;display:flex;flex-direction:column;align-items:center;gap:20px}
.grip.sm{width:38px;margin:5px auto -5px}
.g1{height:80px}
.g2{height:137px}
.char-a{font:36px/36px "Liberation Sans",sans-serif;color:#d0d0d0;display:flex}
.char-a i{width:2px;height:36px;background:#bbb;margin-left:2px}
.char-p{font:38px/30px "Liberation Sans",sans-serif;color:#d0d0d0}
.dfill{flex:1;background:#2d2d2d}
.dock2{flex:1;display:flex;flex-direction:column;gap:6px}
.panel{display:flex;flex-direction:column;background:#323232}
.color-panel{height:694px;flex:none}
.layers-panel{flex:1;min-height:0}
.ptabs{height:56px;flex:none;display:flex;background:#272727;position:relative;align-items:stretch;color:#808080;font-size:23px}
.ptabs span{width:79px;display:flex;align-items:center;justify-content:center;border-right:1px solid #1f1f1f;padding-bottom:9px}
.ptabs span.on{background:#323232;color:#e6e6e6;border-right:0}
.ptabs .pmenu{width:20px;height:15px;margin:20px 12px 0 auto}
.layers-panel .ptabs span:not(.on){color:#a0a0a0}
.color-body{flex:1;display:flex;padding:14px 0 0 16px}
.swatch-wrap{width:74px;flex:none;height:70px;position:relative}
.cs-bg,.cs-fg{position:absolute;border:2px solid #fff;outline:2px solid #111}
.cs-bg{left:23px;top:29px;width:38px;height:38px;background:#000}
.cs-fg{left:4px;top:9px;width:36px;height:36px;background:#0050a4;outline:4px solid #666;box-shadow:0 0 0 2px #111}
.field{width:546px;height:582px;position:relative;overflow:hidden;background:linear-gradient(180deg,rgba(0,0,0,0),#000),linear-gradient(90deg,#fff,#007bff)}
.ring{position:absolute;left:532px;top:196px;width:24px;height:24px;border:2px solid #fff;border-radius:50%}
.hue{margin-left:34px;width:38px;height:582px;position:relative;background:linear-gradient(180deg,#f00,#f0f 16.66%,#00f 33.33%,#0ff 50%,#0f0 66.66%,#ff0 83.33%,#f00)}
.hue-arrow{position:absolute;left:-17px;top:226px;width:13px;height:14px;background:#ddd;clip-path:polygon(0 0,50% 0,100% 50%,50% 100%,0 100%)}

.lrow{display:flex;align-items:center;flex:none;padding-left:8px;color:#777;border-bottom:2px solid #2a2a2a}
.filter{height:65px;padding-top:10px}
.blend{height:58px}
.lock{height:63px;padding-bottom:3px;border-bottom:2px solid #242424}
.sel{height:38px;background:#2c2c2c;border:2px solid #404040;border-radius:7px;display:flex;align-items:center;flex:none}
.f-sel{width:171px;padding:0 8px 0 14px;gap:7px}
.f-sel .chev-s,.b-sel .chev-s{margin-left:auto}
.b-sel{width:234px;padding:0 8px 0 18px}
.ficons{display:flex;align-items:center;margin-left:33px;gap:24px}
.ftoggle{width:18px;height:36px;border:2px solid #444;border-radius:9px;position:relative}
.ftoggle::after{content:"";position:absolute;left:-1px;top:-2px;width:16px;height:18px;border-radius:50%;background:#8a8a8a}
.lab-op{margin-left:15px;width:113px;white-space:nowrap}
.mini-spin{width:107px;height:38px;background:#2c2c2c;border:2px solid #404040;border-radius:7px;display:flex;align-items:center;flex:none;font-size:22px;padding-left:6px;letter-spacing:-.5px}
.mini-spin em{margin-left:auto;width:29px;height:100%;border-left:2px solid #404040;display:flex;align-items:center;justify-content:center}
.lab-lock{margin-left:6px;width:74px;white-space:nowrap}
.lockicons{display:flex;align-items:center;gap:16px;width:196px}
.lab-fill{margin-left:22px;width:64px;white-space:nowrap}
.layerlist{flex:1;background:#2a2a2a}
.layer{display:flex;height:69px}
.eyecell{width:61px;display:flex;align-items:center;justify-content:center}
.layer-sel{width:647px;background:#4b4b4b;display:flex;align-items:center;padding-left:7px;color:#e0e0e0}
.thumb{width:64px;height:52px;background:#fff;border:3px solid #666}
.layer-sel span{margin-left:20px}
.l-lock{margin-left:auto;margin-right:32px}
.lfooter{height:48px;flex:none;background:#323232;border-top:2px solid #262626;display:flex;align-items:center;justify-content:flex-end;gap:30px;padding:0 58px 2px 0;color:#808080}
.fx{font:italic 26px "Liberation Serif",serif;width:20px}

.taskbar{height:60px;flex:none;display:flex;align-items:center;position:relative;background:linear-gradient(90deg,#000 0,#000 140px,#1c1020 160px,#1a1a28 200px,#000 240px,#000 600px,#171d22 700px,#000 780px,#000 1000px,#1c1510 1080px,#000 1150px,#000 1300px,#1b2230 1380px,#23253a 1500px,#0b1020 1660px,#2a2a30 1750px,#000 1850px,#000)}
.tb-win{width:80px;flex:none;padding-left:17px;display:flex}
.tb-apps{display:flex;flex:none;width:1928px}
.tb{width:62.1px;height:60px;flex:none;display:flex;align-items:center;justify-content:center;position:relative}
.tb svg{width:32px;height:32px}
.tb.ul::after,.tb.active::after{content:"";position:absolute;left:50%;bottom:0;width:46px;height:4px;margin-left:-23px;background:#ff8fbb}
.tb.active{background:rgba(255,255,255,.18)}
.tb.active::after{width:60px;margin-left:-30px}
.tb-tray{display:flex;align-items:center;height:60px;flex:1;position:relative}
.tr{display:flex;align-items:center;justify-content:center;flex:none;color:#fff}
.w48{width:48px}
.w44{width:44px}
.w74{width:74px}
.w86{width:86px}
.w84{width:84px}
.ime{font-size:28px}
.clock{font-size:25px}
.showdesk{width:2px;height:60px;background:#555;margin-left:15px}

.dialog{position:absolute;left:736px;top:270px;width:909px;height:1035px;background:#323232;border:2px solid #5a5a5a;border-top-width:3px;box-shadow:0 4px 14px rgba(0,0,0,.35);display:flex;flex-direction:column;color:#a8a8a8;font-size:26px}
.dlg-title{height:55px;flex:none;background:#fff;display:flex;align-items:center;padding:0 0 3px 13px;color:#111;font-size:24.500px}
.dlg-ctl{margin-left:auto;display:flex;align-items:center;padding-right:37px}
.d-min{width:19px;height:3px;background:#c8c8c8;margin-right:72px}
.d-max{width:19px;height:20px;border:2.5px solid #111;margin-right:73px}
.dlg-body{padding:0 0 0 22px}
.dlg-top{display:flex;align-items:flex-start;padding-top:16px}
fieldset.grp{margin:0;min-width:0;border:2px solid #242424;position:relative}
legend{padding:0;line-height:36px;height:36px}
.grp-preset{width:667px;height:367px;padding:12px 18px 0 17px}
.grp-preset legend{margin-left:10px;padding:0 14px;color:#cfcfcf}
.gear{position:absolute;left:575px;top:-29px;background:#323232}
.plist{height:298px;background:#2c2c2c;border:2px solid #212121;border-top-width:4px;display:flex;padding-left:3px;font-size:24px}
.prows{width:587px;display:flex;flex-direction:column;gap:4px;padding-top:2px}
.prow{height:54px;flex:none;background:#282828;display:flex;align-items:center;padding-left:16px;color:#cfcfcf}
.pchev{width:8px;height:22px}
.pfold{width:28px;height:22px;margin-left:14px}
.prow span{margin-left:20px}
.pscroll{flex:1;display:flex;flex-direction:column;align-items:center;padding:16px 0 0 0;position:relative}
.pthumb{width:23px;height:86px;background:#464646;margin-top:10px}
.chev-s.up{transform:rotate(180deg)}
.chev-s.down{margin-top:152px}
.dlg-btns{display:flex;flex-direction:column;gap:20px;margin:18px 0 0 18px;width:175px}
.pill{width:175px;height:48px;border-radius:24px;border:2px solid #7c7c7c;background:#323232;color:#cfcfcf;font:26px/1 "Noto Sans CJK SC","Liberation Sans",sans-serif;padding:0}
.pill.primary{border:3px solid #e2e2e2;color:#dcdcdc}
.pill.off{border-color:#434343;color:#5e5e5e}
.name-row{display:flex;align-items:center;margin-top:21px;height:48px;padding-left:2px}
.name-row label{width:122px;color:#8f8f8f;white-space:nowrap}
.name-input{width:443px;height:43px;background:#2a2a2a;border:2px solid #444;padding-left:6px;line-height:38px;color:#bcbcbc;font-size:24px}
.pill.new{margin-left:129px;width:164px;border-color:#7c7c7c}
.grp-grad{width:857px;height:463px;margin-top:17px!important;padding:0}
.grp-grad>legend{margin-left:25px;padding:0 14px 0 73px;display:flex;align-items:center;height:38px;line-height:38px;color:#cfcfcf;gap:13px;white-space:nowrap}
.gtype{width:109px;height:38px;background:#2b2b2b;border:2px solid #444;border-radius:6px;display:flex;align-items:center;justify-content:space-between;padding:0 7px 0 18px;color:#cfcfcf;font-size:25px}
.smooth{display:flex;align-items:center;height:38px;margin-top:25px}
.l174{width:195px;text-align:right;flex:none;white-space:nowrap}
.srow .l174{width:174px}
.lw{color:#8f8f8f}
.ctl110{width:110px;flex:none;display:flex;justify-content:flex-end;align-items:center}
.spin{width:95px;height:39px;background:#2c2c2c;border:2px solid #404040;border-radius:6px;display:flex;align-items:center;padding-left:4px;color:#e0e0e0;font-size:24px}
.spin em{margin-left:auto;width:29px;height:100%;border-left:2px solid #404040;display:flex;align-items:center;justify-content:center}
.spin.dim em .chev-s{color:#555}
.spin.dim{background:#2e2e2e;border-color:#3a3a3a}
.spin.dim em{border-color:#3a3a3a}
.pct{width:37px;padding-left:13px;flex:none;color:#a8a8a8;font-size:24px}
.pct.hidden{visibility:hidden}
.gradbox{height:120px;position:relative;margin-top:21px}
.gbar{position:absolute;left:28px;top:34px;width:798px;height:50px;background:linear-gradient(90deg,#0c54a5,#3a80d8 56%,#6b9eee)}
.stop{position:absolute;width:18px;height:18px;border:3px solid #fff;background:#000}
.stop.top{top:0}
.stop.top::after{content:"";position:absolute;left:-3px;top:16px;border:10px solid transparent;border-top:12px solid #7a7a7a;border-bottom:0}
.stop.top.s-l{left:21px}
.stop.top.s-r{left:811px}
.stop.bot{top:99px;height:20px}
.stop.bot::after{content:"";position:absolute;left:-3px;top:-16px;border:10px solid transparent;border-bottom:12px solid #7a7a7a;border-top:0}
.b1{left:21px;background:#0c54a5}
.b2{left:465px;background:#3a80d8}
.b3{left:811px;background:#6b9eee}
.stop.cur::after{border-bottom-color:#000}
.dia{position:absolute;top:88px;width:11px;height:11px;transform:rotate(45deg) scale(.85);border:2px solid #fff}
.d1{left:247px}
.d2{left:642px}
.grp-stops{width:820px;height:189px;margin-left:19px!important;margin-top:13px!important;padding:0}
.grp-stops>legend{margin-left:26px;padding:0 15px;color:#cfcfcf}
.srow{display:flex;align-items:center;height:48px;margin-top:13px}
.srow + .srow{margin-top:22px}
.srow .cswatch{width:87px;height:44px;background:#3a80d8;border:2px solid #171717;flex:none}
.srow .chev-s{margin:0 -6px 0 12px;color:#c8c8c8}
.srow .spin .chev-s{margin:0;color:#555}
.l129{width:129px;text-align:right;flex:none;white-space:nowrap}
.posbox{width:84px;height:44px;margin-left:16px;background:#2a2a2a;border:2px solid #3e3e3e;flex:none;display:flex;align-items:center;padding-left:4px;font-size:25px}
.posbox.focus{border-color:#1668c8}
.posbox span{background:#0078d7;color:#fff;line-height:36px;padding:0 1px}
.p2{width:52px;padding-left:14px}
.rect{width:153px;height:48px;background:#2a2a2a;border:2px solid #3e3e3e;border-radius:5px;color:#cfcfcf;font:26px/1 "Noto Sans CJK SC","Liberation Sans",sans-serif;padding:0;margin-left:15px}
.rect.off{color:#5e5e5e;background:#2c2c2c;border-color:#3a3a3a}
.off-row label,.off-row .pct{color:#636363}
```
